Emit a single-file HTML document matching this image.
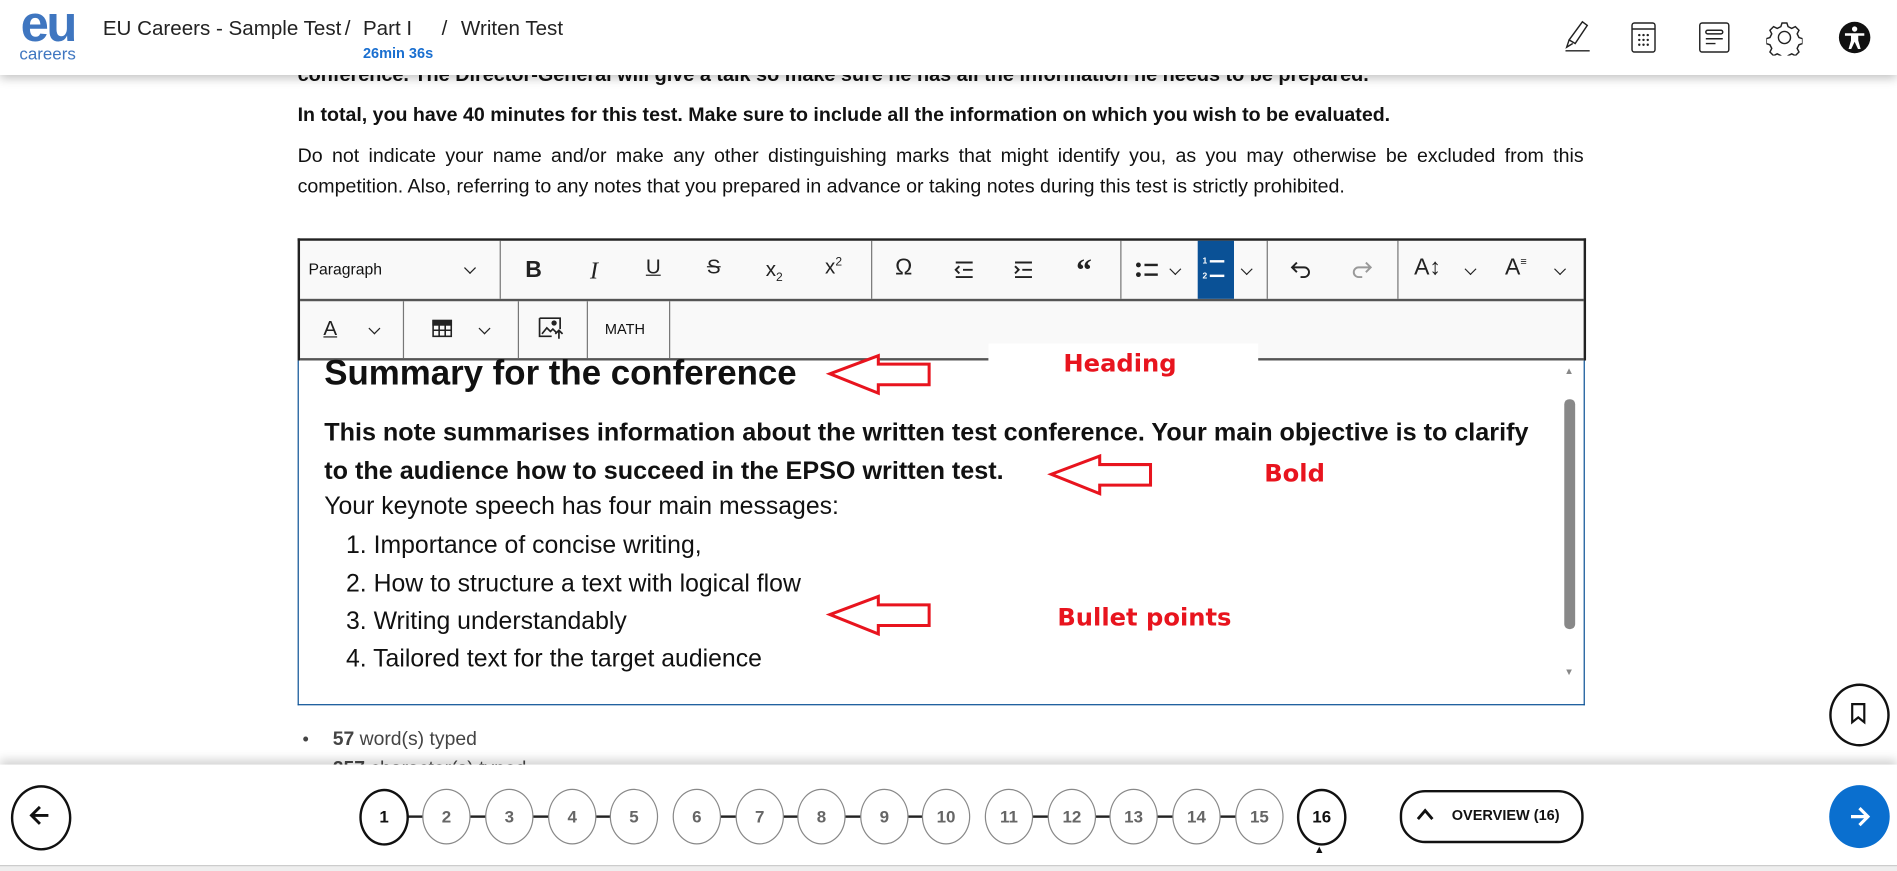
<!DOCTYPE html>
<html><head><meta charset="utf-8"><style>
html,body{margin:0;padding:0;width:1897px;height:871px;overflow:hidden;background:#fff;}
#f{position:absolute;left:0;top:0;width:1568px;height:720px;transform:scale(1.2098);transform-origin:0 0;font-family:"Liberation Sans",Arial,sans-serif;color:#111;overflow:hidden;background:#fff}
.a{position:absolute}
.hdr{left:0;top:0;width:1568px;height:62px;background:#fff;box-shadow:0 3px 8px rgba(0,0,0,.25);z-index:5}
.ht{font-size:17px;color:#222;top:14px}
.tb{background:#f9f9f9}
.sep{position:absolute;width:1px;background:#777}
.ic{position:absolute;font-size:17px;color:#222;text-align:center;width:30px;margin-left:-15px}
.chev{position:absolute;width:6px;height:6px;border-right:1.5px solid #222;border-bottom:1.5px solid #222;transform:rotate(45deg)}
.red{color:#e8141e;font-weight:bold;font-size:20px;font-family:"DejaVu Sans","Liberation Sans",sans-serif}
.li{position:absolute;left:286px;font-size:20.5px}
.c{position:absolute;width:38px;height:44px;border:1px solid #888;border-radius:50%;text-align:center;line-height:44px;font-size:14px;font-weight:bold;color:#666;background:#fff;top:652px}
.ln{position:absolute;height:2px;background:#222;top:674px}
</style></head><body><div id="f">

<div class="a" style="left:246px;top:53px;font-size:16.4px;font-weight:bold;width:1063px;white-space:nowrap">conference. The Director-General will give a talk so make sure he has all the information he needs to be prepared.</div>
<div class="a" style="left:246px;top:86px;font-size:16.2px;font-weight:bold;white-space:nowrap">In total, you have 40 minutes for this test. Make sure to include all the information on which you wish to be evaluated.</div>
<div class="a" style="left:246px;top:117px;font-size:16.2px;line-height:25px;width:1063px;text-align:justify;text-align-last:left">Do not indicate your name and/or make any other distinguishing marks that might identify you, as you may otherwise be excluded from this competition. Also, referring to any notes that you prepared in advance or taking notes during this test is strictly prohibited.</div>

<div class="a hdr">
  <div class="a" style="left:17px;top:-1px;font-size:42px;font-weight:bold;color:#3f76c0;letter-spacing:-2px;line-height:42px">eu</div>
  <div class="a" style="left:16px;top:36px;font-size:14px;color:#3f76c0">careers</div>
  <div class="a ht" style="left:85px">EU Careers - Sample Test</div>
  <div class="a ht" style="left:285px">/</div>
  <div class="a ht" style="left:300px">Part I</div>
  <div class="a" style="left:300px;top:37px;font-size:12px;font-weight:bold;color:#1a6fd0">26min 36s</div>
  <div class="a ht" style="left:365px">/</div>
  <div class="a ht" style="left:381px">Writen Test</div>
  <svg class="a" style="left:1288px;top:16px" width="30" height="30" viewBox="0 0 30 30" fill="none" stroke="#222" stroke-width="1.2"><path d="M20 2l4 3-10 15-5-3z M9 17l-2 6 5-3 M6 26h20"/></svg>
  <svg class="a" style="left:1347px;top:17px" width="24" height="28" viewBox="0 0 24 28" fill="none" stroke="#222" stroke-width="1.2"><rect x="2" y="2" width="19" height="24" rx="2"/><path d="M2 7h19"/><g fill="#222" stroke="none"><circle cx="8" cy="12" r="1"/><circle cx="11.5" cy="12" r="1"/><circle cx="15" cy="12" r="1"/><circle cx="8" cy="16" r="1"/><circle cx="11.5" cy="16" r="1"/><circle cx="15" cy="16" r="1"/><circle cx="8" cy="20" r="1"/><circle cx="11.5" cy="20" r="1"/><circle cx="15" cy="20" r="1"/></g></svg>
  <svg class="a" style="left:1403px;top:17px" width="28" height="28" viewBox="0 0 28 28" fill="none" stroke="#222" stroke-width="1.2"><rect x="2" y="2" width="24" height="24" rx="2"/><rect x="7" y="8" width="14" height="3" rx="1.5"/><path d="M7 15h14M7 19h8"/></svg>
  <svg class="a" style="left:1460px;top:16px" width="30" height="30" viewBox="0 0 30 30" fill="none" stroke="#222" stroke-width="1.2"><circle cx="15" cy="15" r="5"/><path d="M13 3h4l1 3 3 1.5 3-1.5 3 3-1.5 3 1.5 3 3 1v4l-3 1-1.5 3 1.5 3-3 3-3-1.5-3 1.5-1 3h-4l-1-3-3-1.5-3 1.5-3-3 1.5-3-1.5-3-3-1v-4l3-1 1.5-3-1.5-3 3-3 3 1.5 3-1.5z"/></svg>
  <svg class="a" style="left:1519px;top:17px" width="28" height="28" viewBox="0 0 28 28"><circle cx="14" cy="14" r="13" fill="#111"/><g fill="#fff"><circle cx="14" cy="7" r="2.2"/><path d="M6 10.5h16v2h-5v4l2 7h-2.2l-2.8-6-2.8 6H9l2-7v-4H6z"/></g></svg>
</div>

<div class="a tb" style="left:246px;top:197px;width:1061px;height:99px;border:2px solid #222;border-bottom:none"></div>
<div class="a" style="left:248px;top:247px;width:1061px;height:2px;background:#555"></div>
<div class="a" style="left:248px;top:296px;width:1061px;height:2px;background:#555"></div>
<div class="a" style="left:255px;top:215px;font-size:13px">Paragraph</div>
<div class="chev" style="left:385px;top:218px"></div>
<div class="sep" style="left:413px;top:199px;height:48px"></div>
<div class="ic" style="left:441px;top:213px;font-weight:bold;font-size:19px">B</div>
<div class="ic" style="left:491px;top:213px;font-style:italic;font-family:'Liberation Serif';font-size:20px">I</div>
<div class="ic" style="left:540px;top:211px;text-decoration:underline">U</div>
<div class="ic" style="left:590px;top:211px;text-decoration:line-through">S</div>
<div class="ic" style="left:640px;top:213px">x<sub style="font-size:10px">2</sub></div>
<div class="ic" style="left:689px;top:211px">x<sup style="font-size:10px">2</sup></div>
<div class="sep" style="left:720px;top:199px;height:48px"></div>
<div class="ic" style="left:747px;top:211px;font-size:19px">Ω</div>
<svg class="a" style="left:788px;top:215px" width="18" height="16" stroke="#222" stroke-width="1.6"><path d="M2 2h14M8 8h8M2 14h14"/><path d="M5 5l-3 3 3 3" fill="none"/></svg>
<svg class="a" style="left:837px;top:215px" width="18" height="16" stroke="#222" stroke-width="1.6"><path d="M2 2h14M8 8h8M2 14h14"/><path d="M2 5l3 3-3 3" fill="none"/></svg>
<div class="ic" style="left:896px;top:209px;font-size:26px;font-weight:bold;font-family:'Liberation Serif'">“</div>
<div class="sep" style="left:926px;top:199px;height:48px"></div>
<svg class="a" style="left:938px;top:215px" width="20" height="16"><g fill="#222"><circle cx="3" cy="4" r="2"/><circle cx="3" cy="12" r="2"/><rect x="8" y="3" width="11" height="2"/><rect x="8" y="11" width="11" height="2"/></g></svg>
<div class="chev" style="left:968px;top:219px"></div>
<div class="a" style="left:990px;top:199px;width:30px;height:48px;background:#0a5196"></div>
<div class="a" style="left:994px;top:211px;font-size:7px;color:#fff;font-weight:bold;line-height:12px">1<br>2</div>
<div class="a" style="left:1000px;top:215px;width:12px;height:2px;background:#fff"></div>
<div class="a" style="left:1000px;top:227px;width:12px;height:2px;background:#fff"></div>
<div class="chev" style="left:1027px;top:219px"></div>
<div class="sep" style="left:1047px;top:199px;height:48px"></div>
<svg class="a" style="left:1066px;top:214px" width="20" height="18" fill="none" stroke="#222" stroke-width="1.6"><path d="M6 3L2 7l4 4M2 7h10a4 4 0 0 1 0 8H9"/></svg>
<svg class="a" style="left:1115px;top:214px" width="20" height="18" fill="none" stroke="#999" stroke-width="1.6"><path d="M14 3l4 4-4 4M18 7H8a4 4 0 0 0 0 8h3"/></svg>
<div class="sep" style="left:1155px;top:199px;height:48px"></div>
<div class="ic" style="left:1180px;top:211px;font-size:19px">A↕</div>
<div class="chev" style="left:1212px;top:219px"></div>
<div class="ic" style="left:1253px;top:211px;font-size:19px">A<span style="font-size:9px;vertical-align:top">≡</span></div>
<div class="chev" style="left:1286px;top:219px"></div>
<div class="ic" style="left:273px;top:262px;text-decoration:underline">A</div>
<div class="chev" style="left:306px;top:268px"></div>
<div class="sep" style="left:333px;top:249px;height:47px"></div>
<svg class="a" style="left:357px;top:264px" width="17" height="15" fill="none" stroke="#222" stroke-width="1.3"><rect x="1" y="1" width="15" height="13"/><path d="M1 4.5h15M1 9h15M6 4.5v9.5M11 4.5v9.5"/><rect x="1" y="1" width="15" height="3.5" fill="#222"/></svg>
<div class="chev" style="left:397px;top:268px"></div>
<div class="sep" style="left:428px;top:249px;height:47px"></div>
<svg class="a" style="left:445px;top:262px" width="22" height="19" fill="none" stroke="#222" stroke-width="1.4"><path d="M1 1h17v9M1 1v15h10"/><path d="M3 14l4-5 3 3 2-2 3 3" /><circle cx="13" cy="5" r="1.5" fill="#222"/><path d="M17 18v-7M14 14l3-3 3 3"/></svg>
<div class="sep" style="left:485px;top:249px;height:47px"></div>
<div class="a" style="left:500px;top:265px;font-size:12px">MATH</div>
<div class="sep" style="left:553px;top:249px;height:47px"></div>

<div class="a" style="left:246px;top:298px;width:1062px;height:284px;border:1px solid #0a5196;border-top:none;background:#fff"></div>
<div class="a" style="left:817px;top:284px;width:223px;height:30px;background:#fff"></div>
<div class="a" style="left:1293px;top:330px;width:9px;height:190px;background:#888;border-radius:4px"></div>
<div class="a" style="left:1293px;top:302px;font-size:8px;color:#888">▲</div>
<div class="a" style="left:1293px;top:551px;font-size:8px;color:#888">▼</div>
<div class="a" style="left:268px;top:293px;font-size:28.8px;font-weight:bold;white-space:nowrap">Summary for the conference</div>
<div class="a" style="left:268px;top:342px;font-size:20.8px;font-weight:bold;line-height:32px;white-space:nowrap">This note summarises information about the written test conference. Your main objective is to clarify<br>to the audience how to succeed in the EPSO written test.</div>
<div class="a" style="left:268px;top:407px;font-size:20.5px">Your keynote speech has four main messages:</div>
<div class="li" style="top:439px">1. Importance of concise writing,</div>
<div class="li" style="top:471px">2. How to structure a text with logical flow</div>
<div class="li" style="top:502px">3. Writing understandably</div>
<div class="li" style="top:533px">4. Tailored text for the target audience</div>
<svg class="a" style="left:0;top:0" width="1568" height="720" fill="#fff" stroke="#e8141e" stroke-width="2.5">
<path d="M686 309L726 294V301H768V318H726V325Z"/>
<path d="M869 392L909 377V384H951V401H909V408Z"/>
<path d="M686 508L726 493V500H768V517H726V524Z"/>
</svg>
<div class="a red" style="left:879px;top:288px">Heading</div>
<div class="a red" style="left:1045px;top:379px">Bold</div>
<div class="a red" style="left:874px;top:498px">Bullet points</div>

<div class="a" style="left:250px;top:603px;font-size:15px;color:#444">•</div>
<div class="a" style="left:275px;top:603px;font-size:16px;color:#444"><b>57</b> word(s) typed</div>
<div class="a" style="left:275px;top:627px;font-size:16px;color:#444"><b>257</b> character(s) typed</div>
<div class="a" style="left:1512px;top:565px;width:46px;height:48px;border:2px solid #111;border-radius:50%;background:#fff"></div>
<svg class="a" style="left:1529px;top:581px" width="14" height="18" fill="none" stroke="#111" stroke-width="1.8"><path d="M2 1h10v15l-5-4-5 4z"/></svg>

<div class="a" style="left:0;top:632px;width:1568px;height:83px;background:#fff;box-shadow:0 -4px 8px rgba(0,0,0,.18)"></div>
<div class="a" style="left:0;top:715px;width:1568px;height:5px;background:#eee;border-top:1px solid #ccc"></div>
<div class="a" style="left:9px;top:649px;width:46px;height:50px;border:2px solid #111;border-radius:50%"></div>
<svg class="a" style="left:23px;top:664px" width="20" height="20" fill="none" stroke="#111" stroke-width="2.4"><path d="M17 10H4M10 3L3 10l7 7"/></svg>
<div class="ln" style="left:337px;width:200px"></div>
<div class="ln" style="left:595px;width:200px"></div>
<div class="ln" style="left:853px;width:200px"></div>
<div class="c" style="left:297px;border:2px solid #111;color:#111;width:37px;height:43px;line-height:43px">1</div>
<div class="c" style="left:349px">2</div><div class="c" style="left:401px">3</div><div class="c" style="left:453px">4</div><div class="c" style="left:504px">5</div>
<div class="c" style="left:556px">6</div><div class="c" style="left:608px">7</div><div class="c" style="left:659px">8</div><div class="c" style="left:711px">9</div><div class="c" style="left:762px">10</div>
<div class="c" style="left:814px">11</div><div class="c" style="left:866px">12</div><div class="c" style="left:917px">13</div><div class="c" style="left:969px">14</div><div class="c" style="left:1021px">15</div>
<div class="c" style="left:1072px;border:2px solid #111;color:#111;width:37px;height:43px;line-height:43px">16</div>
<div class="a" style="left:1086px;top:697px;font-size:9px">▲</div>
<div class="a" style="left:1157px;top:653px;width:148px;height:40px;border:2px solid #111;border-radius:21px"></div>
<svg class="a" style="left:1171px;top:668px" width="14" height="10" fill="none" stroke="#111" stroke-width="2.4"><path d="M1 9l6-7 6 7"/></svg>
<div class="a" style="left:1200px;top:667px;font-size:12px;font-weight:bold">OVERVIEW (16)</div>
<div class="a" style="left:1512px;top:649px;width:50px;height:52px;background:#0a6fcf;border-radius:50%"></div>
<svg class="a" style="left:1527px;top:665px" width="20" height="20" fill="none" stroke="#fff" stroke-width="2.6"><path d="M3 10h13M10 3l7 7-7 7"/></svg>
</div></body></html>
